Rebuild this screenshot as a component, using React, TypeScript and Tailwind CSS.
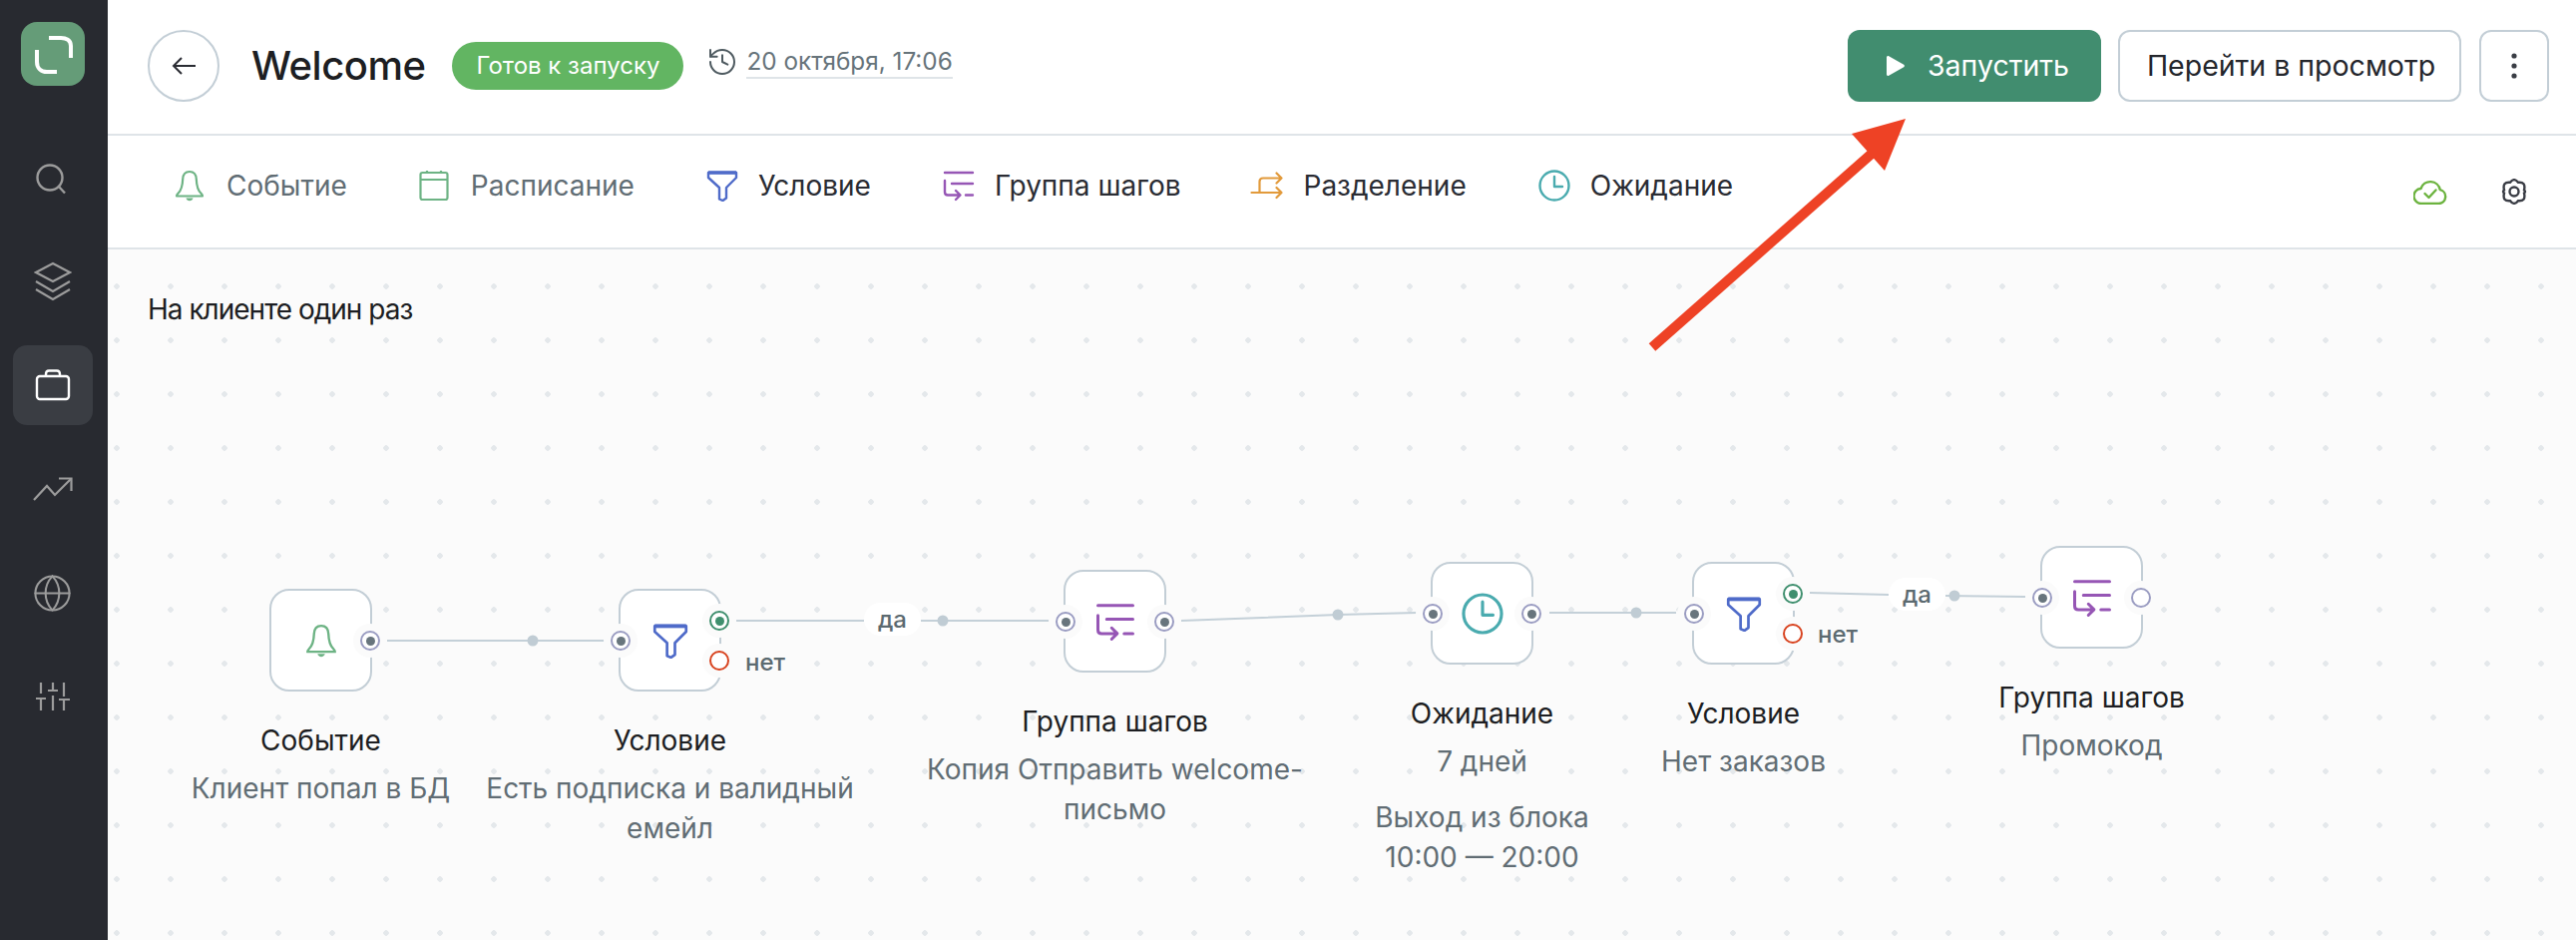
import React from 'react';
import { Globe, History } from 'lucide-react';

function BellIcon({ className }: { className?: string }) {
    return (
        <svg viewBox="0 0 30 32" fill="none" stroke="currentColor" strokeWidth="2.2" strokeLinejoin="round" className={className}>
            <path d="M15 2c-4.4 0-6.6 3.2-6.8 7.5-.2 6-.8 10.500-4.700 14.300-1 1-1.500 1.900-1.500 2.700h26c0-.8-.5-1.700-1.500-2.700-3.900-3.800-4.500-8.300-4.700-14.300C21.600 5.200 19.400 2 15 2z" />
            <path d="M11.500 28.500h7c-.4 1.700-1.800 2.700-3.500 2.700s-3.100-1-3.500-2.700z" fill="currentColor" stroke="none" />
        </svg>
    );
}

function CalendarIcon({ className }: { className?: string }) {
    return (
        <svg viewBox="0 0 30 32" fill="none" stroke="currentColor" strokeWidth="2.2" className={className}>
            <rect x="1.500" y="3" width="27" height="27" rx="2" />
            <path d="M1.500 10h27M8 1v2M22 1v2" />
        </svg>
    );
}

function FilterIcon({ className }: { className?: string }) {
    return (
        <svg viewBox="0 0 32 32" fill="none" stroke="currentColor" strokeWidth="2.400" strokeLinejoin="round" className={className}>
            <path d="M2 3h28v5L20 18v10.500L16.500 31 13 29.500V18L2 8z" />
            <path d="M2 3h28" strokeWidth="3.500" />
        </svg>
    );
}

function GroupIcon({ className }: { className?: string }) {
    return (
        <svg viewBox="0 0 32 32" fill="none" stroke="currentColor" strokeWidth="2.400" strokeLinecap="round" strokeLinejoin="round" className={className}>
            <path d="M2 3h28M9 14h21M23 25.500h7" />
            <path d="M2 11v11.500c0 2 1 3 3 3h12M13 21l4.500 4.500L13 30" />
        </svg>
    );
}

function SplitIcon({ className }: { className?: string }) {
    return (
        <svg viewBox="0 0 32 30" fill="none" stroke="currentColor" strokeWidth="2.200" strokeLinecap="round" strokeLinejoin="round" className={className}>
            <path d="M1 22h30M26 17l5 5-5 5" />
            <path d="M9 22V11c0-2.500 1.300-3.500 3.500-3.500H31M26 2.500l5 5-5 5" />
        </svg>
    );
}

function ClockIcon({ className }: { className?: string }) {
    return (
        <svg viewBox="0 0 32 32" fill="none" stroke="currentColor" strokeWidth="2.400" strokeLinecap="round" strokeLinejoin="round" className={className}>
            <circle cx="16" cy="16" r="14.500" />
            <path d="M16 7v10h8" />
        </svg>
    );
}

function Port({ className, ring = 'border-[#9b9dc2]', dot = 'bg-[#68757d]', hollow = false }: { className: string; ring?: string; dot?: string; hollow?: boolean }) {
    return (
        <div className={`absolute flex h-[34px] w-[34px] items-center justify-center rounded-full bg-[#fbfbfb] ${className}`}>
            <div className={`flex h-[20px] w-[20px] items-center justify-center rounded-full border-2 bg-white ${ring}`}>
                {!hollow && <div className={`h-[9px] w-[9px] rounded-full ${dot}`} />}
            </div>
        </div>
    );
}

function Node({ className, icon, title, children, ports }: { className: string; icon: React.ReactNode; title: string; children: React.ReactNode; ports: React.ReactNode }) {
    return (
        <div className={`absolute flex w-[103px] flex-col items-center ${className}`}>
            <div className="relative flex h-[103px] w-[103px] items-center justify-center rounded-[20px] border-2 border-[#c3ced6] bg-white">
                {icon}
                {ports}
            </div>
            <div className="mt-[29px] w-[380px] shrink-0 text-center text-[28px] leading-[40px] text-[#616d74]">
                <div className="text-[#1d1e22]">{title}</div>
                <div className="mt-2">{children}</div>
            </div>
        </div>
    );
}

const leftPort = '-left-[17px] top-[33px]';
const rightPort = '-right-[17px] top-[33px]';

function YesNoPorts() {
    return (
        <>
            <Port className="-left-[17px] top-[33px]" />
            <Port className="-right-[17px] top-[13px]" ring="border-[#3f8f6e]" dot="bg-[#3f8f6e]" />
            <Port className="-right-[17px] top-[53px]" ring="border-[#d8431f]" hollow />
        </>
    );
}

function Pill({ className }: { className: string }) {
    return (
        <div className={`absolute flex h-[33px] w-[57px] items-center justify-center rounded-full bg-white text-[24px] font-medium text-[#5c6a70] ${className}`}>
            да
        </div>
    );
}

export default function App() {
    return (
        <main className="relative flex h-[942px] w-[2582px] overflow-hidden bg-white font-['Inter',sans-serif]">

            {/* Sidebar */}
            <aside className="flex w-[108px] shrink-0 flex-col items-center bg-[#282a30] pr-[3px] pt-[22px] text-[#9c9c9c]">
                <div className="flex h-[64px] w-[64px] items-center justify-center rounded-[16px] bg-[#659c78]">
                    <svg viewBox="0 0 64 64" fill="none" stroke="white" strokeWidth="4" className="h-[64px] w-[64px]">
                        <path d="M28 16h12c5 0 10 2 10 8v12" />
                        <path d="M16 28v12c0 6 4 10 10 10h10" />
                    </svg>
                </div>
                <div className="mt-[55px] flex h-[80px] w-[80px] items-center justify-center">
                    <svg viewBox="0 0 36 36" fill="none" stroke="currentColor" strokeWidth="2.400" className="h-[36px] w-[36px]">
                        <circle cx="15" cy="15" r="12.500" />
                        <path d="M24 24l6 6.500" />
                    </svg>
                </div>
                <div className="mt-[21px] flex h-[80px] w-[80px] items-center justify-center">
                    <svg viewBox="0 0 38 40" fill="none" stroke="currentColor" strokeWidth="2.200" className="h-[40px] w-[38px]">
                        <path d="M19 2l17 9-17 9-17-9z" />
                        <path d="M2 20l17 10 17-10M2 28l17 10 17-10" />
                    </svg>
                </div>
                <div className="mt-6 flex h-[80px] w-[80px] items-center justify-center rounded-[14px] bg-[#3a3d43]">
                    <svg viewBox="0 0 36 32" fill="none" stroke="white" strokeWidth="2.400" className="h-[32px] w-[36px]">
                        <rect x="2" y="7" width="32" height="23" rx="3" />
                        <path d="M11 7V5c0-2 1-3.500 3-3.500h8c2 0 3 1.500 3 3.500v2" />
                    </svg>
                </div>
                <div className="mt-6 flex h-[80px] w-[80px] items-center justify-center">
                    <svg viewBox="0 0 40 24" fill="none" stroke="currentColor" strokeWidth="2.200" className="h-[24px] w-[40px]">
                        <path d="M1 23l13-14 8 9L38 2" />
                        <path d="M26 1.500h12.500V14" />
                    </svg>
                </div>
                <div className="mt-6 flex h-[80px] w-[80px] items-center justify-center">
                    <Globe size={41} strokeWidth={1.2} />
                </div>
                <div className="mt-6 flex h-[80px] w-[80px] items-center justify-center">
                    <svg viewBox="0 0 34 28" fill="none" stroke="currentColor" strokeWidth="2.200" className="h-[28px] w-[34px]">
                        <path d="M5 0v11M5 16v12M0 16h10M17 0v8M17 13v15M12 8h10M28 0v14M28 17v11M23 17h11" />
                    </svg>
                </div>
            </aside>

            <div className="flex min-w-0 flex-1 flex-col">

                {/* Header */}
                <header className="flex h-[136px] shrink-0 items-center border-b-2 border-[#dfe4e8] pb-[2px] pl-[40px] pr-[27px]">
                    <button className="flex h-[72px] w-[72px] items-center justify-center rounded-full border-2 border-[#c3ced6]">
                        <svg viewBox="0 0 24 20" fill="none" stroke="#2a2c33" strokeWidth="2" className="h-[20px] w-[24px]">
                            <path d="M24 10H2M10 2l-8 8 8 8" />
                        </svg>
                    </button>
                    <h1 className="ml-[32px] text-[40px] font-medium leading-none tracking-[-0.5px] text-[#1d1e22]">Welcome</h1>
                    <span className="ml-[27px] flex h-[48px] w-[232px] items-center justify-center rounded-full bg-[#62b562] text-[24px] text-white">Готов к запуску</span>
                    <div className="mb-2 ml-[23px] flex items-center gap-[8px] text-[#67747b]">
                        <History size={32} strokeWidth={1.5} className="text-[#4e5a60]" />
                        <span className="border-b-2 border-[#dfe4e8] text-[24.300px] leading-[32px]">20 октября, 17:06</span>
                    </div>
                    <div className="ml-auto flex items-center">
                        <button className="flex h-[72px] w-[254px] items-center gap-[23px] rounded-[12px] bg-[#418d6f] pl-[39px] text-[28.500px] text-white">
                            <svg viewBox="0 0 18 20" fill="white" className="h-[20px] w-[18px]">
                                <path d="M0 1.500C0 .3 1.200-.4 2.200.2l15 8.500c.9.6.9 2 0 2.600l-15 8.500C1.200 20.400 0 19.700 0 18.500z" />
                            </svg>
                            Запустить
                        </button>
                        <button className="ml-[17px] flex h-[72px] w-[344px] items-center justify-center rounded-[12px] border-2 border-[#c3ced6] pl-[3px] text-[28.500px] text-[#24262c]">
                            Перейти в просмотр
                        </button>
                        <button className="ml-[18px] flex h-[72px] w-[70px] items-center justify-center rounded-[12px] border-2 border-[#c3ced6]">
                            <svg viewBox="0 0 6 26" fill="#3a3d45" className="h-[26px] w-[6px]">
                                <circle cx="3" cy="3" r="2.600" />
                                <circle cx="3" cy="13" r="2.600" />
                                <circle cx="3" cy="23" r="2.600" />
                            </svg>
                        </button>
                    </div>
                </header>

                {/* Toolbar */}
                <nav className="flex h-[114px] shrink-0 items-center border-b-2 border-[#dfe4e8] pl-[67px] pr-[49px] text-[28px]">
                    <div className="flex items-center gap-[72px] pb-3">
                        <div className="flex items-center gap-[22px] text-[#616d74]">
                            <BellIcon className="h-[32px] w-[30px] text-[#6db384]" />
                            Событие
                        </div>
                        <div className="flex items-center gap-[22px] text-[#616d74]">
                            <CalendarIcon className="h-[32px] w-[30px] text-[#6db384]" />
                            Расписание
                        </div>
                        <div className="flex items-center gap-[20px] text-[#2a2c33]">
                            <FilterIcon className="h-[32px] w-[32px] text-[#4f6bc9]" />
                            Условие
                        </div>
                        <div className="flex items-center gap-[20px] text-[#2a2c33]">
                            <GroupIcon className="h-[32px] w-[32px] text-[#9656b5]" />
                            Группа шагов
                        </div>
                        <div className="-ml-[3px] flex items-center gap-[21px] text-[#2a2c33]">
                            <SplitIcon className="h-[30px] w-[33px] text-[#e29a3b]" />
                            Разделение
                        </div>
                        <div className="flex items-center gap-[20px] text-[#2a2c33]">
                            <ClockIcon className="h-[32px] w-[32px] text-[#4aabaf]" />
                            Ожидание
                        </div>
                    </div>
                    <div className="ml-auto flex items-center gap-[54px]">
                        <svg viewBox="0 0 34 25" fill="none" stroke="#6cb33f" strokeWidth="2.400" strokeLinejoin="round" className="h-[25px] w-[34px]">
                            <path d="M8.500 24h17a7 7 0 0 0 1.300-13.800A10 10 0 0 0 7.500 9a7.500 7.500 0 0 0 1 15z" />
                            <path d="M11.500 14l4 4 7-7.500" strokeLinecap="round" />
                        </svg>
                        <svg viewBox="0 0 26 26" fill="none" stroke="#3a3d45" strokeWidth="2.400" className="h-[26px] w-[26px]">
                            <path d="M9 3.800Q13 -1.500 17 3.800Q25 3 23 11.500Q25 13 23 14.500Q25 23 17 22.200Q13 27.500 9 22.200Q1 23 3 14.500Q1 13 3 11.500Q1 3 9 3.800z" />
                            <circle cx="13" cy="13" r="4.500" />
                        </svg>
                    </div>
                </nav>

                {/* Canvas */}
                <section className="relative min-h-0 flex-1 overflow-hidden bg-[#fbfbfb] bg-[radial-gradient(circle,#e4e8eb_2.5px,transparent_3px)] bg-[size:54px_54px] bg-[position:-18px_10px]">
                    <p className="absolute left-[40px] top-[44px] text-[28px] leading-[32px] tracking-[-1px] text-[#1d1e22]">На клиенте один раз</p>

                    {/* Edges between the nodes */}
                    <svg viewBox="108 250 2474 692" fill="none" stroke="#c4d0d8" strokeWidth="2" className="absolute inset-0 h-[692px] w-[2474px]">
                        <path d="M388 642H606M738 622H866M923 622H1052M1184 622L1341 616L1420 614M1553 614H1680M1814 594L1893 596M1950 597L2030 598" />
                        <g fill="#c0ccd4" stroke="none">
                            <circle cx="534" cy="642" r="5.500" />
                            <circle cx="945" cy="622" r="5.500" />
                            <circle cx="1341" cy="616" r="5.500" />
                            <circle cx="1640" cy="614" r="5.500" />
                            <circle cx="1959" cy="597" r="5.500" />
                        </g>
                    </svg>

                    <Node
                        className="left-[162px] top-[340px]"
                        icon={<BellIcon className="h-[34px] w-[32px] text-[#6db384]" />}
                        title="Событие"
                        ports={<Port className={rightPort} />}
                    >
                        Клиент попал в БД
                    </Node>

                    <Node
                        className="left-[512px] top-[340px]"
                        icon={<FilterIcon className="h-[36px] w-[36px] text-[#4f6bc9]" />}
                        title="Условие"
                        ports={<YesNoPorts />}
                    >
                        Есть подписка и валидный емейл
                    </Node>

                    <Node
                        className="left-[958px] top-[321px]"
                        icon={<GroupIcon className="h-[40px] w-[40px] text-[#9656b5]" />}
                        title="Группа шагов"
                        ports={<><Port className={leftPort} /><Port className={rightPort} /></>}
                    >
                        Копия Отправить welcome-письмо
                    </Node>

                    <Node
                        className="left-[1326px] top-[313px]"
                        icon={<ClockIcon className="h-[42px] w-[42px] text-[#4aabaf]" />}
                        title="Ожидание"
                        ports={<><Port className={leftPort} /><Port className={rightPort} /></>}
                    >
                        7 дней
                        <div className="mt-4">Выход из блока<br />10:00 — 20:00</div>
                    </Node>

                    <Node
                        className="left-[1588px] top-[313px]"
                        icon={<FilterIcon className="h-[36px] w-[36px] text-[#4f6bc9]" />}
                        title="Условие"
                        ports={<YesNoPorts />}
                    >
                        Нет заказов
                    </Node>

                    <Node
                        className="left-[1937px] top-[297px]"
                        icon={<GroupIcon className="h-[40px] w-[40px] text-[#9656b5]" />}
                        title="Группа шагов"
                        ports={<><Port className={leftPort} /><Port className={rightPort} hollow /></>}
                    >
                        Промокод
                    </Node>

                    <Pill className="left-[758px] top-[354px]" />
                    <Pill className="left-[1785px] top-[329px]" />
                    <span className="absolute left-[639px] top-[399px] text-[24px] font-medium leading-[30px] text-[#5c6a70]">нет</span>
                    <span className="absolute left-[1714px] top-[371px] text-[24px] font-medium leading-[30px] text-[#5c6a70]">нет</span>
                </section>
            </div>

            {/* Annotation arrow on top of the screenshot */}
            <svg viewBox="0 0 2582 942" className="pointer-events-none absolute inset-0 h-[942px] w-[2582px]">
                <path d="M1656 348L1876 154" stroke="#ee4225" strokeWidth="10" />
                <polygon points="1910,119 1856,134 1889,171" fill="#ee4225" />
            </svg>
        </main>
    );
}
